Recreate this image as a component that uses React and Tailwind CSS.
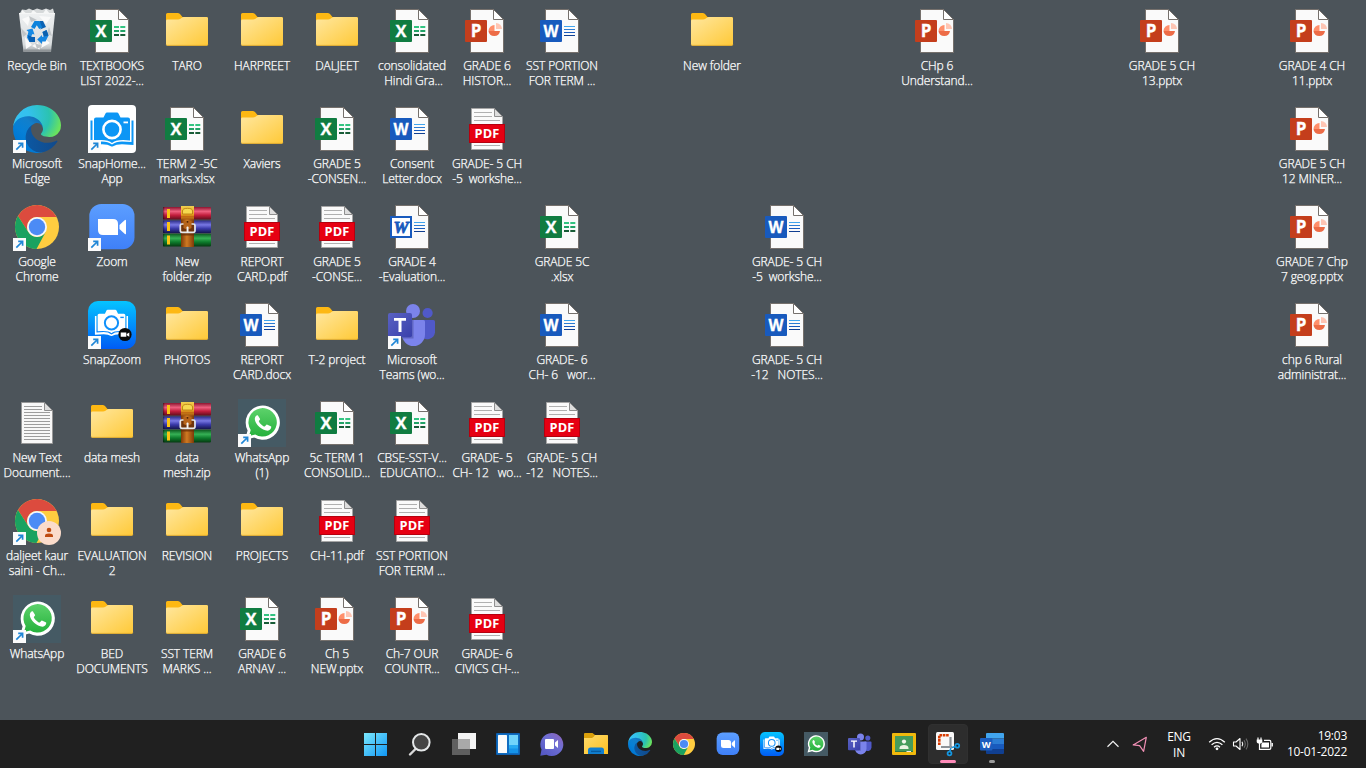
import React from "react";

const ICON = "block h-full w-full overflow-visible";

function Shortcut() {
  return (
    <g>
      <rect x="0" y="35" width="13" height="13" fill="#fbfbfb" />
      <path d="M3.3 44.7 L9 39 M5.2 38.4 H9.6 V42.8" fill="none" stroke="#1f86d6" strokeWidth="1.7" />
    </g>
  );
}

function Page({ children }) {
  return (
    <svg viewBox="0 0 48 48" className={ICON}>
      <path d="M7.5 2.5 H30.5 L40.5 12.5 V45.5 H7.5 Z" fill="#fafafa" stroke="#75706c" strokeWidth="1" />
      <path d="M30.5 2.5 V12.5 H40.5 Z" fill="#fff" stroke="#75706c" strokeWidth="1" />
      {children}
    </svg>
  );
}

function Badge({ color, letter, size = 15.5 }) {
  return (
    <g>
      <rect x="2" y="13" width="22" height="22" rx="1" fill={color} />
      <text x="13" y="29.9" textAnchor="middle" fontSize={size} fontWeight="700" fill="#fff" stroke="#fff" strokeWidth=".3" className="font-['Open_Sans',sans-serif]">{letter}</text>
    </g>
  );
}

function Excel() {
  return (
    <Page>
      <path d="M26 19h5v2h-5zM32.3 19h5v2h-5z" fill="#33c481" />
      <path d="M26 23h5v2h-5zM32.3 23h5v2h-5z" fill="#21a366" />
      <path d="M26 27h5v2h-5zM32.3 27h5v2h-5z" fill="#185c37" />
      <Badge color="#107c41" letter="X" size={16.5} />
    </Page>
  );
}

function WordLines() {
  return (
    <g>
      <rect x="26" y="19" width="11" height="1" fill="#41a5ee" />
      <rect x="26" y="22" width="11" height="1" fill="#2b7cd3" />
      <rect x="26" y="25" width="11" height="1" fill="#185abd" />
      <rect x="26" y="28" width="11" height="1" fill="#103f91" />
    </g>
  );
}

function Word() {
  return (
    <Page>
      <WordLines />
      <Badge color="#185abd" letter="W" />
    </Page>
  );
}

function OldWord() {
  return (
    <Page>
      <WordLines />
      <rect x="3" y="14" width="20" height="20" fill="#fff" stroke="#185abd" strokeWidth="2" />
      <text x="13" y="29.7" textAnchor="middle" fontSize="17" fontWeight="700" fontStyle="italic" fill="#185abd" stroke="#185abd" strokeWidth=".8" className="font-['Liberation_Serif',serif]">W</text>
    </Page>
  );
}

function PowerPoint() {
  return (
    <Page>
      <path d="M31.5 24 V18 A6 6 0 0 0 25.5 24 Z" fill="#ff8f6b" />
      <path d="M25.5 24 A5.8 5.8 0 0 0 37 24 Z" fill="#ed6c47" />
      <path d="M33 22 V16 A6 6 0 0 1 39 22 Z" fill="#ffc5b3" />
      <Badge color="#c43e1c" letter="P" size={17} />
    </Page>
  );
}

function Pdf() {
  return (
    <svg viewBox="0 0 48 48" className={ICON}>
      <path d="M8.5 3.5 H31.5 L39.5 11.5 V44.5 H8.5 Z" fill="#fafafa" stroke="#a5a5a5" />
      <path d="M31.5 3.5 V11.5 H39.5 Z" fill="#dedede" stroke="#8e8e8e" />
      <path d="M11 7.5h18M11 11.5h18M11 15.5h26M11 40.5h26" stroke="#b0b0b0" strokeWidth="1.1" />
      <rect x="6.5" y="19.5" width="35" height="18" fill="#e60012" stroke="#b5000e" />
      <text x="24" y="33" textAnchor="middle" fontSize="12.8" fontWeight="700" fill="#fff" letterSpacing=".2" className="font-['Open_Sans',sans-serif]">PDF</text>
    </svg>
  );
}

function TextFile() {
  return (
    <svg viewBox="0 0 48 48" className={ICON}>
      <path d="M8.5 3.5 H31.5 L39.5 11.5 V44.5 H8.5 Z" fill="#f8f8f8" stroke="#989898" />
      <path d="M31.5 3.5 V11.5 H39.5 Z" fill="#dedede" stroke="#8e8e8e" />
      <path d="M11 7.5h18M11 10.5h18M11 13.5h26M11 16.5h26M11 19.5h26M11 22.5h26M11 25.5h26M11 28.5h26M11 31.5h26M11 34.5h26M11 37.5h26M11 40.5h26" stroke="#9d9d9d" />
    </svg>
  );
}

function Folder() {
  return (
    <svg viewBox="0 0 48 48" className={ICON}>
      <defs>
        <linearGradient id="folderFront" x1="0" y1="0" x2="1" y2="1">
          <stop offset="0" stopColor="#ffe79f" />
          <stop offset="1" stopColor="#ffc937" />
        </linearGradient>
      </defs>
      <path d="M3 7.5 Q3 6 4.5 6 H14.5 Q16 6 17 7 L19.5 10 H43.5 Q45 10 45 11.5 V20 H3 Z" fill="#fdb813" />
      <path d="M3 14 Q3 12.6 4.5 12.6 H15 Q16.5 12.6 17.5 11.8 L18.5 11 Q19.5 10 21 10 H43.5 Q45 10 45 11.5 V37.2 Q45 38.7 43.5 38.7 H4.5 Q3 38.7 3 37.2 Z" fill="url(#folderFront)" />
      <path d="M3.3 37.5 Q3.8 38.4 4.8 38.4 H43.2 Q44.4 38.4 44.8 37.5" fill="none" stroke="#e5ac2c" strokeWidth=".8" />
    </svg>
  );
}

function RecycleBin() {
  return (
    <svg viewBox="0 0 48 48" className={ICON}>
      <defs>
        <linearGradient id="binBody" x1="0" y1="0" x2="0" y2="1">
          <stop offset="0" stopColor="#eef0f1" />
          <stop offset=".8" stopColor="#d9dddf" />
          <stop offset="1" stopColor="#a4a9ac" />
        </linearGradient>
      </defs>
      <path d="M7 6 L9 2.5 L13 3 L16 1.5 L20 3.2 L24 1.5 L29 3 L33 1.6 L37 3 L40 1.5 L41.5 7 L38 12 H10 Z" fill="#d6d9da" />
      <path d="M9 3 L14 7 L8 8 ZM20 3 L25 7 L17 8 ZM33 2 L37 7 L29 8 Z" fill="#f6f7f7" />
      <path d="M6 6.5 H42 L38 45 H10.5 Z" fill="url(#binBody)" />
      <path d="M9 12 L17 9 L15 19 ZM26 9 L38 10 L33 17 ZM12 30 L19 38 L13 42 ZM31 31 L37 36 L28 41 ZM19 39 L25 35 L27 43 Z" fill="#fafafa" />
      <path d="M8 21 L14 27 L10 30 ZM36 20 L39 29 L34 27 ZM22 36 L29 39 L24 42 ZM16 9 L24 13 L18 15 Z" fill="#c1c5c8" />
      <path d="M6 6.5 H42" stroke="#f5f6f6" />
      <path d="M10.5 42.5 H38 V45 H10.8 Z" fill="#8f9497" />
      <path d="M18 20 L21.5 14 H26.5 L30.5 20 L26.2 22 L23.8 18.2 L21.5 22 Z" fill="#0d83dc" />
      <path d="M26.5 14 H30 L33 20 L27 22.5 L29 20 Z" fill="#0b62b4" />
      <path d="M13.5 23 L19.5 21.5 L21.5 27.5 L19.5 27 L17.8 30 H22 V35 H16.5 L14 30.5 L15.4 24.7 Z" fill="#1689e4" />
      <path d="M14.5 28 L19.5 30 H22 V35 H16.5 Z" fill="#085fb3" />
      <path d="M29.5 25 L33.5 23 L35.5 28.5 L32.5 34.5 H29 V37 L24.2 32.4 L29 28 V30 L30.7 29.5 Z" fill="#1585e0" />
      <path d="M29.5 25 L33.5 23 L35.5 28.5 L31 29.5 Z" fill="#0a5fae" />
    </svg>
  );
}

function EdgeMark() {
  return (
    <svg viewBox="0 0 256 256" width="48" height="48">
      <defs>
        <linearGradient id="edgeDeep" x1="63" y1="178" x2="241" y2="178" gradientUnits="userSpaceOnUse">
          <stop offset="0" stopColor="#0c59a4" />
          <stop offset="1" stopColor="#114a8b" />
        </linearGradient>
        <linearGradient id="edgeMid" x1="158" y1="80" x2="46" y2="215" gradientUnits="userSpaceOnUse">
          <stop offset="0" stopColor="#1468b0" />
          <stop offset=".3" stopColor="#127fcb" />
          <stop offset=".67" stopColor="#0680d7" />
          <stop offset="1" stopColor="#0078d4" />
        </linearGradient>
        <radialGradient id="edgeTop" cx="0" cy="0" r="1" gradientUnits="userSpaceOnUse" gradientTransform="matrix(230 40 -45 190 30 62)">
          <stop offset="0" stopColor="#35c1f1" />
          <stop offset=".25" stopColor="#34c1ed" />
          <stop offset=".5" stopColor="#2fc2cf" />
          <stop offset=".72" stopColor="#2bc3b0" />
          <stop offset="1" stopColor="#6be35c" />
        </radialGradient>
      </defs>
      <g transform="translate(-4.63 -4.92)">
        <path fill="url(#edgeDeep)" d="M235.68 195.46a93.73 93.73 0 0 1-10.54 4.71 101.87 101.87 0 0 1-35.9 6.46c-47.32 0-88.54-32.55-88.54-74.32A31.48 31.48 0 0 1 117.13 105c-42.8 1.8-53.8 46.4-53.8 72.53 0 73.88 68.09 81.37 82.76 81.37 7.91 0 19.84-2.3 27-4.56l1.31-.44a128.34 128.34 0 0 0 66.6-52.8 4 4 0 0 0-5.32-5.64z" />
        <path fill="url(#edgeMid)" d="M110.34 246.34A79.2 79.2 0 0 1 87.6 225a80.72 80.72 0 0 1 29.53-120c3.12-1.47 8.45-4.13 15.54-4a32.35 32.35 0 0 1 25.69 13 31.88 31.88 0 0 1 6.36 18.66c0-.21 24.46-79.6-80-79.6-43.9 0-80 41.66-80 78.21a130.15 130.15 0 0 0 12.11 56 128 128 0 0 0 156.38 67.11 75.55 75.55 0 0 1-62.78-8z" />
        <path fill="url(#edgeTop)" d="M156.94 153.78c-.81 1.05-3.3 2.5-3.3 5.66 0 2.61 1.7 5.12 4.72 7.23 14.38 10 41.49 8.68 41.56 8.68a59.56 59.56 0 0 0 30.27-8.35A61.38 61.38 0 0 0 260.57 114c.26-22.41-8-37.31-11.34-43.91C228.09 28.76 182.35 4.92 132.65 4.92A128 128 0 0 0 4.65 131.1c.48-36.54 36.8-66.05 80-66.05 3.5 0 23.46.34 42 10.07 16.34 8.58 24.9 18.94 30.85 29.21 6.18 10.67 7.28 24.15 7.28 29.52s-2.74 13.33-7.84 19.93z" />
      </g>
    </svg>
  );
}

function Edge({ link }) {
  return (
    <svg viewBox="0 0 48 48" className={ICON}>
      <EdgeMark />
      {link && <Shortcut />}
    </svg>
  );
}

function Camera({ color, lens }) {
  return (
    <g fill={color}>
      <path d="M2.5 15.5 H4.5 V37 L14 36.5 Q20 36.5 24 39.5 Q28 36.5 34 36.5 L43.5 37 V15.5 H45.5 V40 L34 39.2 Q28 39.2 24.5 41.5 H23.5 Q20 39.2 14 39.2 L2.5 40 Z" />
      <path d="M8 12.5 H15.5 L17.5 8.5 Q18 7.5 19 7.5 H29 Q30 7.5 30.5 8.5 L32.5 12.5 H40 Q42 12.5 42 14.5 V35.5 Q28 34 24 38 Q20 34 6 35.5 V14.5 Q6 12.5 8 12.5 Z" />
      <circle cx="24" cy="24.5" r="8.6" fill="none" stroke={lens} strokeWidth="2.6" />
      <rect x="35.5" y="16.5" width="4.5" height="1.8" fill={lens} />
    </g>
  );
}

function SnapHome() {
  return (
    <svg viewBox="0 0 48 48" className={ICON}>
      <rect width="48" height="48" rx="4" fill="#fff" />
      <Camera color="#0c96f5" lens="#fff" />
      <Shortcut />
    </svg>
  );
}

function SnapZoom({ link }) {
  return (
    <svg viewBox="0 0 48 48" className={ICON}>
      <defs>
        <linearGradient id="snapSky" x1="0" y1="0" x2="0" y2="1">
          <stop offset="0" stopColor="#05c4ff" />
          <stop offset="1" stopColor="#005cf5" />
        </linearGradient>
      </defs>
      <rect width="48" height="48" rx="10" fill="url(#snapSky)" />
      <g transform="translate(5 3) scale(.77)">
        <Camera color="#fff" lens="#1090fa" />
      </g>
      <circle cx="37" cy="33.5" r="6.6" fill="#0b0b0b" />
      <path d="M32.7 31.4h5.6v4.4h-5.6zM38.8 33 L41.3 31.4 V35.8 L38.8 34.2Z" fill="#fff" />
      {link && <Shortcut />}
    </svg>
  );
}

function Chrome({ link, profile }) {
  return (
    <svg viewBox="0 0 48 48" className={ICON}>
      <circle cx="24" cy="24" r="22" fill="#ffcd40" />
      <path d="M24 14 H43.6 A22 22 0 0 0 4.95 13 L15.34 29 A10 10 0 0 1 24 14 Z" fill="#dc4b3e" />
      <path d="M4.95 13 A22 22 0 0 0 23.5 46 L32.66 29 A10 10 0 0 1 15.34 29 Z" fill="#1aa260" />
      <circle cx="24" cy="24" r="10" fill="#f4f6fb" />
      <circle cx="24" cy="24" r="8.2" fill="#4c8bf5" />
      {profile && (
        <g>
          <circle cx="36" cy="36" r="12" fill="#fbdccb" />
          <circle cx="36" cy="33" r="2.3" fill="#bf4b10" />
          <path d="M32 40 V38.6 Q32 36.4 36 36.4 Q40 36.4 40 38.6 V40 Z" fill="#bf4b10" />
        </g>
      )}
      {link && <Shortcut />}
    </svg>
  );
}

function Zoom({ link }) {
  return (
    <svg viewBox="0 0 48 48" className={ICON}>
      <defs>
        <linearGradient id="zoomBlue" x1="0" y1="0" x2="0" y2="1">
          <stop offset="0" stopColor="#5c9eff" />
          <stop offset="1" stopColor="#3f80f8" />
        </linearGradient>
      </defs>
      <rect x="1.3" y="1" width="45.2" height="45.2" rx="12" fill="url(#zoomBlue)" />
      <path d="M10 16 H25 Q30 16 30 21 V32 H15 Q10 32 10 27 Z" fill="#fff" />
      <path d="M31.5 22 L36.6 17.2 Q38 16 38 17.5 V30.5 Q38 32 36.6 30.8 L31.5 26 Z" fill="#fff" />
      {link && <Shortcut />}
    </svg>
  );
}

function WinRar() {
  return (
    <svg viewBox="0 0 48 48" className={ICON}>
      <defs>
        <linearGradient id="rarRed" x1="0" y1="0" x2="0" y2="1">
          <stop offset="0" stopColor="#8c1630" /><stop offset=".35" stopColor="#ee5f7e" /><stop offset=".65" stopColor="#c21d3c" /><stop offset="1" stopColor="#5f0d1c" />
        </linearGradient>
        <linearGradient id="rarBlue" x1="0" y1="0" x2="0" y2="1">
          <stop offset="0" stopColor="#2a2a86" /><stop offset=".35" stopColor="#7878e4" /><stop offset=".65" stopColor="#3939a8" /><stop offset="1" stopColor="#16164e" />
        </linearGradient>
        <linearGradient id="rarGreen" x1="0" y1="0" x2="0" y2="1">
          <stop offset="0" stopColor="#0d5a20" /><stop offset=".35" stopColor="#36b155" /><stop offset=".65" stopColor="#0d7c2c" /><stop offset="1" stopColor="#063b12" />
        </linearGradient>
        <linearGradient id="rarBelt" x1="0" y1="0" x2="1" y2="0">
          <stop offset="0" stopColor="#7d3a08" /><stop offset=".45" stopColor="#cf7a22" /><stop offset="1" stopColor="#7d3a08" />
        </linearGradient>
        <linearGradient id="rarFlap" x1="0" y1="0" x2="0" y2="1">
          <stop offset="0" stopColor="#f0cf4e" /><stop offset=".6" stopColor="#eda823" /><stop offset="1" stopColor="#a5560e" />
        </linearGradient>
      </defs>
      <rect x="0" y="4" width="48" height="12.6" rx=".8" fill="url(#rarRed)" />
      <rect x="0" y="17.4" width="48" height="12.6" rx=".8" fill="url(#rarBlue)" />
      <rect x="0" y="30.8" width="48" height="12.6" rx=".8" fill="url(#rarGreen)" />
      <path d="M0 4h1.3v12.6H0zM0 17.4h1.3V30H0zM0 30.8h1.3v12.6H0z" fill="#000" opacity=".35" />
      <path d="M4 6h3v9H4zM4 19h3v9H4zM4 32.5h3v9H4z" fill="#fbc414" />
      <rect x="18" y="3" width="13" height="41" fill="url(#rarBelt)" />
      <rect x="18" y="3" width="13" height="13.5" fill="url(#rarFlap)" />
      <path d="M19.5 11 V8 Q19.5 5.3 24.5 5.3 Q29.5 5.3 29.5 8 V11 Z" fill="#f6d84f" stroke="#b3770f" strokeWidth=".8" />
      <path d="M18 13.5 H31" stroke="#c26a12" strokeWidth="1.2" />
      <path d="M18 30 H31 V32.5 H18 Z" fill="#5e2905" opacity=".7" />
      <path d="M18.3 21.5 H30.9 V28.8 H18.3 Z" fill="#6f340c" />
      <path d="M20.5 18 H28.5 V25 Q24.5 27.5 20.5 25 Z" fill="#b7641a" />
      <circle cx="24.5" cy="18.8" r=".9" fill="#4b2002" />
      <path d="M20.5 21 H18.8 Q17.3 21 17.3 22.5 V27.6 Q17.3 29.4 19 29.4 H30.2 Q32 29.4 32 27.6 V22.5 Q32 21 30.4 21 H28.5" fill="none" stroke="#e5e7ea" strokeWidth="1.7" />
      <rect x="23.6" y="23.5" width="1.9" height="6" rx=".8" fill="#f2f2f2" />
    </svg>
  );
}

function WhatsApp({ link }) {
  return (
    <svg viewBox="0 0 48 48" className={ICON}>
      <defs>
        <linearGradient id="waGreen" x1="0" y1="0" x2="0" y2="1">
          <stop offset="0" stopColor="#5dd26b" />
          <stop offset="1" stopColor="#25b13c" />
        </linearGradient>
      </defs>
      <rect width="48" height="48" fill="#455a64" />
      <path d="M7 41 L9.6 31.5 A17.1 17.1 0 1 1 16.2 38.4 Z" fill="#fff" />
      <path d="M11 37 L12.7 31 A14.2 14.2 0 1 1 17.2 35.4 Z" fill="url(#waGreen)" />
      <path d="M19.8 16.2 C18.6 15.8 16.8 17.6 16.8 20 C17 25.5 24 31.5 29.5 31.7 C31.8 31.5 33.6 29.8 33.2 27.6 L28.9 25.5 C28.2 25.5 27.3 27.2 26.7 27.6 C24.8 27.2 21.5 24.2 20.8 22.2 C21.2 21.3 22.2 20.8 22.1 20 Z" fill="#fff" />
      {link && <Shortcut />}
    </svg>
  );
}

function Teams({ link }) {
  return (
    <svg viewBox="0 0 48 48" className={ICON}>
      <defs>
        <linearGradient id="teamsTile" x1="0" y1="0" x2="1" y2="1">
          <stop offset="0" stopColor="#5a62c3" />
          <stop offset="1" stopColor="#3940ab" />
        </linearGradient>
      </defs>
      <circle cx="39.6" cy="12" r="5.1" fill="#5059c9" />
      <path d="M33 19 H45.4 Q47 19 47 20.6 V31.5 A7.8 7.8 0 0 1 33 35 Z" fill="#5059c9" />
      <circle cx="25" cy="10" r="7" fill="#7b83eb" />
      <path d="M14 19 H35.4 Q37 19 37 20.6 V33.5 A11.5 11.5 0 0 1 14 33.5 Z" fill="#7b83eb" />
      <path d="M14 19 H25.5 V37.5 H14.6 Z" fill="#5158ae" opacity=".65" />
      <rect x="0" y="12" width="24" height="24.3" rx="2" fill="url(#teamsTile)" />
      <path d="M6 17 H18 V19.7 H13.5 V31 H10.5 V19.7 H6 Z" fill="#fff" />
      {link && <Shortcut />}
    </svg>
  );
}

const KINDS = {
  bin: <RecycleBin />, xls: <Excel />, dir: <Folder />, doc: <Word />, olddoc: <OldWord />, ppt: <PowerPoint />, pdf: <Pdf />,
  txt: <TextFile />, zip: <WinRar />, edge: <Edge link />, snaphome: <SnapHome />, snapzoom: <SnapZoom link />,
  chrome: <Chrome link />, profile: <Chrome link profile />, zoom: <Zoom link />, whatsapp: <WhatsApp link />, teams: <Teams link />,
};

const ROWS = [
  [["bin", "Recycle Bin"], ["xls", "TEXTBOOKS", "LIST 2022-..."], ["dir", "TARO"], ["dir", "HARPREET"], ["dir", "DALJEET"], ["xls", "consolidated", " Hindi Gra..."], ["ppt", "GRADE 6", "HISTOR..."], ["doc", "SST PORTION", "FOR TERM ..."], 0, ["dir", "New folder"], 0, 0, ["ppt", "CHp 6", "Understand..."], 0, 0, ["ppt", "GRADE 5 CH", "13.pptx"], 0, ["ppt", "GRADE 4 CH", "11.pptx"]],
  [["edge", "Microsoft", "Edge"], ["snaphome", "SnapHome...", "App"], ["xls", "TERM 2 -5C", "marks.xlsx"], ["dir", "Xaviers"], ["xls", "GRADE 5", "-CONSEN..."], ["doc", "Consent", "Letter.docx"], ["pdf", "GRADE- 5 CH", "-5  workshe..."], 0, 0, 0, 0, 0, 0, 0, 0, 0, 0, ["ppt", "GRADE 5 CH", "12 MINER..."]],
  [["chrome", "Google", "Chrome"], ["zoom", "Zoom"], ["zip", "New", "folder.zip"], ["pdf", "REPORT", "CARD.pdf"], ["pdf", "GRADE 5", "-CONSE..."], ["olddoc", "GRADE 4", "-Evaluation..."], 0, ["xls", "GRADE 5C", ".xlsx"], 0, 0, ["doc", "GRADE- 5 CH", "-5  workshe..."], 0, 0, 0, 0, 0, 0, ["ppt", "GRADE 7 Chp", "7 geog.pptx"]],
  [0, ["snapzoom", "SnapZoom"], ["dir", "PHOTOS"], ["doc", "REPORT", "CARD.docx"], ["dir", "T-2 project"], ["teams", "Microsoft", "Teams (wo..."], 0, ["doc", "GRADE- 6", "CH- 6   wor..."], 0, 0, ["doc", "GRADE- 5 CH", "-12   NOTES..."], 0, 0, 0, 0, 0, 0, ["ppt", "chp 6 Rural", "administrat..."]],
  [["txt", "New Text", "Document...."], ["dir", "data mesh"], ["zip", "data", "mesh.zip"], ["whatsapp", "WhatsApp", "(1)"], ["xls", "5c TERM 1", "CONSOLID..."], ["xls", "CBSE-SST-V...", "EDUCATIO..."], ["pdf", "GRADE- 5", "CH- 12   wo..."], ["pdf", "GRADE- 5 CH", "-12   NOTES..."], 0, 0, 0, 0, 0, 0, 0, 0, 0, 0],
  [["profile", "daljeet kaur", "saini - Ch..."], ["dir", "EVALUATION", "2"], ["dir", "REVISION"], ["dir", "PROJECTS"], ["pdf", "CH-11.pdf"], ["pdf", "SST PORTION", "FOR TERM ..."], 0, 0, 0, 0, 0, 0, 0, 0, 0, 0, 0, 0],
  [["whatsapp", "WhatsApp"], ["dir", "BED", "DOCUMENTS"], ["dir", "SST TERM", "MARKS ..."], ["xls", "GRADE 6", "ARNAV ..."], ["ppt", "Ch 5", "NEW.pptx"], ["ppt", "Ch-7 OUR", "COUNTR..."], ["pdf", "GRADE- 6", "CIVICS CH-..."], 0, 0, 0, 0, 0, 0, 0, 0, 0, 0, 0],
];

function DesktopItem({ item }) {
  if (!item) return <div />;
  const [kind, ...lines] = item;
  return (
    <div className="flex flex-col items-center pr-px pt-[7px]">
      <div className="h-12 w-12">{KINDS[kind]}</div>
      <div className="mt-[3px] flex flex-col items-center text-[12px] font-light leading-[15px] tracking-[-0.1px] text-white [-webkit-text-stroke:0.25px_white]">
        {lines.map((line, i) => (
          <span key={i} className="whitespace-pre">{line}</span>
        ))}
      </div>
    </div>
  );
}

const S = "block h-6 w-6 overflow-visible";

const TASKS = [
  <svg viewBox="0 0 24 24" className={S}>
    <defs><linearGradient id="win" x1="0" y1="0" x2="1" y2="1" ><stop offset="0" stopColor="#7be8fd" /><stop offset="1" stopColor="#1097f5" /></linearGradient></defs>
    <path d="M0 1h11v11H0zM12 1h11v11H12zM0 13h11v11H0zM12 13h11v11H12z" fill="url(#win)" />
  </svg>,
  <svg viewBox="0 0 24 24" className={S}>
    <path d="M8 16.5 L2 22.5" stroke="#d8d8d8" strokeWidth="2.4" strokeLinecap="round" />
    <circle cx="13.3" cy="10.3" r="8.3" fill="#454545" stroke="#e4e7e8" strokeWidth="2" />
  </svg>,
  <svg viewBox="0 0 24 24" className={S}>
    <rect x="6" y="1" width="18" height="16" fill="#f4f4f4" />
    <rect x="0" y="7" width="18" height="16" fill="#5f5f5f" />
    <rect x="6" y="7" width="12" height="10" fill="#a9a9a9" />
  </svg>,
  <svg viewBox="0 0 24 24" className={S}>
    <rect x="0" y="1" width="24" height="22" rx="1" fill="#0c5eae" />
    <rect x="1" y="2" width="22" height="20" fill="#0f6cc0" />
    <rect x="2" y="3" width="9" height="18" rx=".6" fill="#fbfbfb" />
    <rect x="13" y="3" width="9" height="10" fill="#71d4fb" />
    <rect x="13" y="13" width="9" height="8" fill="#1593e8" />
    <rect x="13" y="13" width="9" height="3.5" fill="#27aaf2" />
  </svg>,
  <svg viewBox="0 0 24 24" className={S}>
    <defs><linearGradient id="chat" x1="1" y1="0" x2=".2" y2="1"><stop offset="0" stopColor="#9162b6" /><stop offset=".45" stopColor="#6f6fd4" /><stop offset="1" stopColor="#5558c4" /></linearGradient></defs>
    <path d="M11.7 1 A11.5 11.5 0 1 1 6.5 22.7 L.3 23.8 L1.5 17.6 A11.5 11.5 0 0 1 11.7 1 Z" fill="url(#chat)" />
    <rect x="5" y="7" width="9" height="10" rx="1" fill="#fff" />
    <path d="M15 10.5 L18 8 V16 L15 13.5 Z" fill="#fff" />
  </svg>,
  <svg viewBox="0 0 24 24" className={S}>
    <defs><linearGradient id="explorer" x1="0" y1="0" x2="1" y2="1"><stop offset="0" stopColor="#ffdc6c" /><stop offset="1" stopColor="#fdbf21" /></linearGradient></defs>
    <path d="M0 2 Q0 1 1 1 H8.5 L11 3 H23 Q24 3 24 4 V10 H0 Z" fill="#dba00b" />
    <path d="M0 6 H8 Q10 5 11 3 H23 Q24 3 24 4 V22 H0 Z" fill="url(#explorer)" />
    <path d="M4 22 V18 Q4 15.5 6.5 15.5 H17.5 Q20 15.5 20 18 V22 Z" fill="#117fd0" />
    <path d="M7 19.4 H17" stroke="#075a9e" strokeWidth="1.4" />
  </svg>,
  <Edge />, <Chrome />, <Zoom />, <SnapZoom />, <WhatsApp />, <Teams />,
  <svg viewBox="0 0 24 24" className={S}>
    <rect x="0" y="1" width="24" height="22" rx="1" fill="#f0b90d" />
    <rect x="3" y="4" width="18" height="15.7" fill="#469c5c" />
    <rect x="3" y="19" width="18" height="1" fill="#317a43" />
    <circle cx="12" cy="9.6" r="2.1" fill="#f2f6ec" />
    <path d="M7.5 17 V15.7 Q8 13 12 13 Q16 13 16.5 15.7 V17 Z" fill="#eaf3e2" />
    <path d="M14.5 19 H19 V20 H14.5 Z" fill="#eee" />
  </svg>,
  <svg viewBox="0 0 24 24" className={S}>
    <rect x="0" y="0" width="18" height="18" rx="1.5" fill="#f8f8f8" />
    <path d="M3.3 13 V3.3 H13" fill="none" stroke="#d83b01" strokeWidth="2.6" strokeDasharray="2.6 .7" />
    <path d="M14.5 5 V16 M5 15 H16" stroke="#8b9197" strokeWidth="2.2" />
    <path d="M14.5 14.5 V20" stroke="#9ea4a9" strokeWidth="1" opacity=".7" />
    <circle cx="21.3" cy="13.7" r="1.9" fill="#202020" stroke="#1596e0" strokeWidth="1.8" />
    <circle cx="13.5" cy="21.5" r="1.9" fill="#202020" stroke="#1596e0" strokeWidth="1.8" />
    <path d="M19.5 14.5 L16 15.5 M13.7 19.5 L15 16" stroke="#1596e0" strokeWidth="1.6" />
  </svg>,
  <svg viewBox="0 0 24 24" className={S}>
    <path d="M6 2 Q6 1 7 1 H23 Q24 1 24 2 V6.5 H6 Z" fill="#41a5ee" />
    <path d="M6 6.5 H24 V12 H6 Z" fill="#2b7cd3" />
    <path d="M6 12 H24 V17 H6 Z" fill="#185abd" />
    <path d="M6 17 H24 V21 Q24 22 23 22 H7 Q6 22 6 21 Z" fill="#103f91" />
    <rect x="0" y="6" width="12.4" height="12.4" rx="1" fill="#1a5dbe" />
    <text x="6.2" y="15.6" textAnchor="middle" fontSize="9.3" fontWeight="700" fill="#fff" className="font-['Open_Sans',sans-serif]">W</text>
  </svg>,
];

function TaskButton({ icon, index }) {
  const active = index === 13;
  const open = index === 14;
  return (
    <div className={active ? "flex h-10 w-10 flex-col items-center rounded-[4px] border border-[#303030] bg-[#2d2d2d] pt-[7px]" : "flex h-10 w-10 flex-col items-center pt-2"}>
      <div className="h-6 w-6">{icon}</div>
      {active && <div className="mt-1 h-[3px] w-4 rounded-full bg-[#ff8bb9]" />}
      {open && <div className="mt-1 h-[3px] w-1.5 rounded-full bg-[#9a9a9a]" />}
    </div>
  );
}

function Tray() {
  return (
    <div className="flex items-center text-[12px] leading-[16px] tracking-[-0.25px] text-white">
      <svg viewBox="0 0 14 8" className="h-2 w-3.5"><path d="M1.5 6.7 L7 1.3 L12.5 6.7" fill="none" stroke="#f2f2f2" strokeWidth="1.2" /></svg>
      <svg viewBox="0 0 16 17" className="ml-3 h-[17px] w-4"><path d="M14.3 1.3 L1.2 8.9 L7.6 9.7 L11.6 15.3 Z" fill="none" stroke="#f08fb4" strokeWidth="1.2" strokeLinejoin="round" /></svg>
      <div className="ml-[15px] flex w-[32px] flex-col items-center pt-0.5"><span>ENG</span><span>IN</span></div>
      <svg viewBox="0 0 18 14" className="ml-[13px] h-3.5 w-[18px]">
        <path d="M1.2 5.2 Q9 -2 16.8 5.2 M3.6 7.8 Q9 3 14.4 7.8 M6 10.2 Q9 7.7 12 10.2" fill="none" stroke="#fff" strokeWidth="1.3" />
        <circle cx="9" cy="11.8" r="1.4" fill="#fff" />
      </svg>
      <svg viewBox="0 0 18 14" className="ml-[6px] h-3.5 w-[18px]">
        <path d="M1.5 5 H4 L8 1.5 V12.5 L4 9 H1.5 Z" fill="none" stroke="#fff" strokeWidth="1.1" strokeLinejoin="round" />
        <path d="M10 4.8 Q11.6 7 10 9.2" fill="none" stroke="#fff" strokeWidth="1.1" />
        <path d="M12 3.2 Q14.6 7 12 10.8 M14 1.6 Q17.6 7 14 12.4" fill="none" stroke="#686868" strokeWidth="1.1" />
      </svg>
      <svg viewBox="0 0 18 14" className="ml-[6px] h-3.5 w-[18px]">
        <path d="M2 .5 V3 M5 .5 V3" stroke="#fff" strokeWidth="1.2" />
        <path d="M.7 2.6 H6.3 V4.6 Q6.3 6.6 3.5 6.6 Q.7 6.6 .7 4.6 Z" fill="#fff" />
        <path d="M3.5 6 V12.4 H13.5 Q14.8 12.4 14.8 11 V5 Q14.8 3.4 13.5 3.4 H8" fill="none" stroke="#fff" strokeWidth="1.2" />
        <path d="M6 5.5 H13 V10.4 H5.4 V7.5 Z" fill="#fff" />
        <rect x="15.5" y="6" width="1.4" height="3.5" fill="#fff" />
      </svg>
      <div className="ml-[13px] flex w-[60px] flex-col items-end"><span className="whitespace-nowrap">19:03</span><span className="whitespace-nowrap">10-01-2022</span></div>
    </div>
  );
}

export default function App() {
  return (
    <div className="flex h-[768px] w-[1366px] flex-col overflow-hidden bg-[#4c545a] font-['Open_Sans','Noto_Sans',sans-serif]">
      <main className="grid h-[720px] grid-cols-[repeat(18,75px)] auto-rows-[98px] content-start">
        {ROWS.flatMap((row, r) => row.map((item, c) => <DesktopItem key={`${r}-${c}`} item={item} />))}
      </main>
      <footer className="flex h-12 items-center justify-between bg-[#202020] pl-[356px] pr-[19px]">
        <nav className="flex gap-1">
          {TASKS.map((icon, i) => <TaskButton key={i} icon={icon} index={i} />)}
        </nav>
        <Tray />
      </footer>
    </div>
  );
}
